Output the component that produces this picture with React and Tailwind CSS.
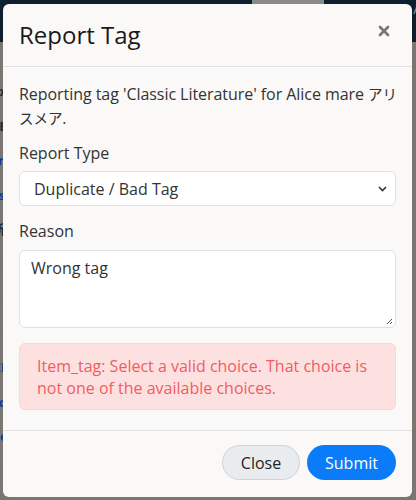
import { X } from "lucide-react";

const font = { fontFamily: "'Open Sans', 'Noto Sans CJK JP', sans-serif" };

export default function App() {
  return (
    <div className="relative w-[416px] h-[500px] overflow-hidden bg-[#7b7671]" style={font}>
      {/* page behind the overlay */}
      <div className="h-[42px] bg-[#0e1e2d] flex items-start">
        <div className="ml-[252px] w-[72px] h-[4px] bg-[#8a8a8a]" />
        <div className="ml-auto text-[#8a8f96] text-sm leading-none pt-[2px] mr-[-6px]">A</div>
      </div>
      <div className="flex flex-col gap-[15px] pt-[40px] pl-0 text-[13px] font-bold">
        <span className="text-[#2a2a2a] -ml-2">xx</span>
        <span className="text-[#1d2b3a] -ml-2">EE</span>
        <span className="text-[#0a3f9e] -ml-2">rr</span>
        <span className="text-[#0a3f9e] -ml-2">ss</span>
        <span className="text-[#1d2b3a] -ml-2">新新</span>
        <span className="text-[#0a3f9e] -ml-2">II</span>
        <span className="text-[#0a3f9e] -ml-2">II</span>
        <span className="text-[#0a3f9e] -ml-2">II</span>
        <span className="text-[#0a3f9e] -ml-2">KK</span>
        <span className="text-[#0a3f9e] -ml-2">cc</span>
        <span className="text-[#0a3f9e] -ml-2">oo</span>
        <span className="text-[#0a3f9e] -ml-2">II</span>
        <span className="text-[#0a3f9e] -ml-2">kk</span>
      </div>

      {/* modal */}
      <div className="absolute left-[3px] top-[4px] w-[409px] h-[493px] rounded-md bg-[#faf9f7] flex flex-col">
        <div className="h-[63px] flex items-center justify-between px-4 border-b border-[#dee2e6]">
          <h2 className="text-[24px] text-[#1a1a1a]">Report Tag</h2>
          <X size={16} strokeWidth={4} className="text-[#777] -mt-[8px] mr-[4px]" />
        </div>
        <div className="px-4 pt-[15px] pb-[20px] text-[16px] text-[#333]">
          <p className="leading-[24px] mr-[-6px] tracking-[-0.05px]">
            Reporting tag 'Classic Literature' for Alice mare{" "}
            <span className="text-[14.5px] leading-none">アリスメア</span>.
          </p>
          <label className="block mt-[11px] mb-[6px] leading-[24px]">Report Type</label>
          <div className="relative h-[35px] rounded-md border border-[#dee2e6] bg-white flex items-center pl-[14px]">
            <span className="text-[#333]">Duplicate / Bad Tag</span>
            <svg className="absolute right-[8px] top-[14px]" width="9" height="6" viewBox="0 0 9 6">
              <path d="M1 1l3.5 3.5L8 1" fill="none" stroke="#333" strokeWidth="1.6" />
            </svg>
          </div>
          <label className="block mt-[13px] mb-[7px] leading-[24px]">Reason</label>
          <div className="relative h-[78px] rounded-md border border-[#dee2e6] bg-white pl-[11px] pt-[5px]">
            <span className="leading-[24px]">Wrong tag</span>
            <svg className="absolute right-[2px] bottom-[2px]" width="7" height="7" viewBox="0 0 7 7">
              <path d="M6 1L1 6M6 4L4 6" stroke="#555" strokeWidth="1" />
            </svg>
          </div>
          <div className="mt-[15px] h-[67px] rounded-md border border-[#fcd5d7] bg-[#fde1e1] text-[#f25c5f] px-[17px] pt-[11px] leading-[22px]">
            Item_tag: Select a valid choice. That choice is not one of the available choices.
          </div>
        </div>
        <div className="border-t border-[#dee2e6] flex justify-end gap-[7px] px-4 pt-[14px]">
          <button className="w-[78px] h-[35px] rounded-full bg-[#e9ecef] border border-[#cfd3d7] text-[#222] text-[16px]">
            Close
          </button>
          <button className="w-[89px] h-[35px] rounded-full bg-[#0a7cf9] text-white text-[16px]">
            Submit
          </button>
        </div>
      </div>
    </div>
  );
}
